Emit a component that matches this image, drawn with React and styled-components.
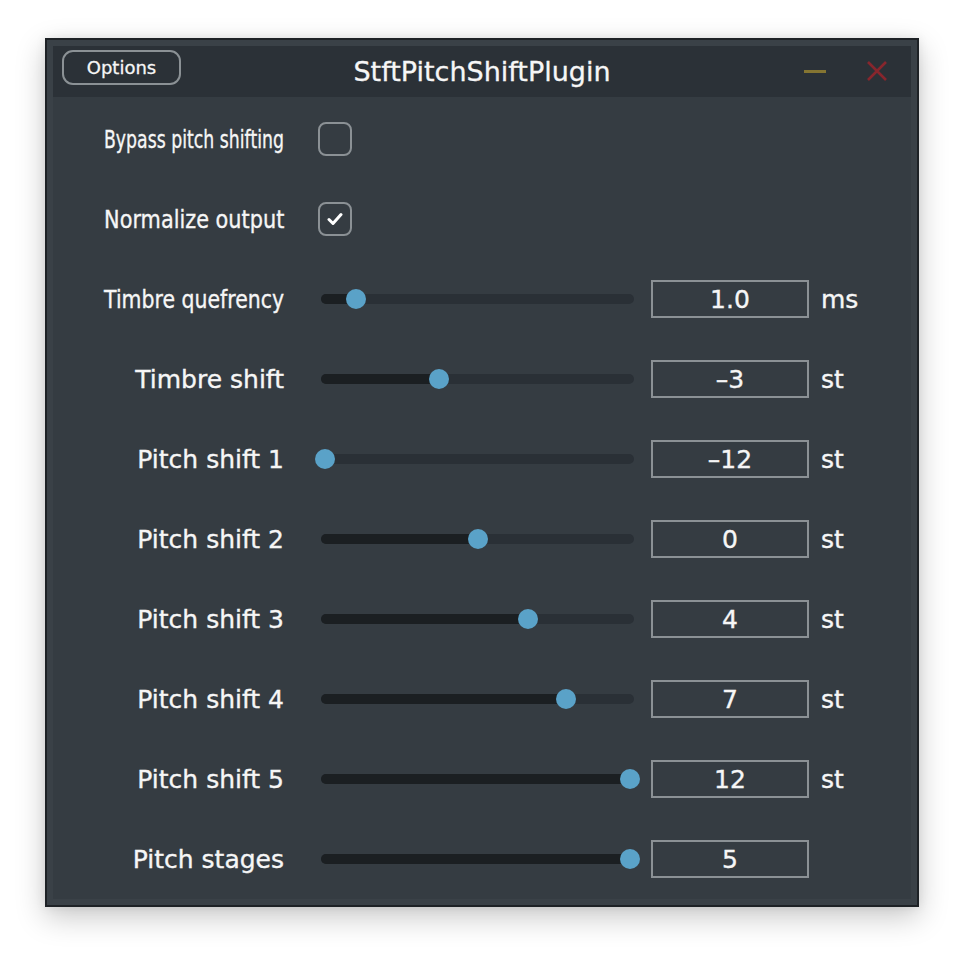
import React, { useLayoutEffect, useRef, useState } from 'react';
import styled, { createGlobalStyle } from 'styled-components';

const GlobalStyle = createGlobalStyle`
  html, body {
    margin: 0;
    padding: 0;
    background: #ffffff;
  }
  body {
    font-family: "DejaVu Sans", "Liberation Sans", sans-serif;
    color: #f6f6f6;
  }
`;

const Page = styled.div`
  padding: 38px 0 0 45px;
  width: 964px;
  height: 960px;
  box-sizing: border-box;
`;

const Window = styled.div`
  width: 874px;
  box-sizing: border-box;
  border: 2px solid #1e2226;
  background: #3a4147;
  padding: 6px;
  box-shadow: 0 10px 28px rgba(0, 0, 0, 0.22), 0 0 10px rgba(0, 0, 0, 0.08);
`;

const TitleBar = styled.div`
  position: relative;
  height: 51px;
  background: #2b3137;
  display: flex;
  align-items: center;
  justify-content: center;
`;

const OptionsButton = styled.button`
  position: absolute;
  left: 9px;
  top: 4px;
  width: 119px;
  height: 35px;
  box-sizing: border-box;
  border: 2px solid #8b9195;
  border-radius: 11px;
  background: #2b3137;
  color: #f6f6f6;
  font-family: inherit;
  font-size: 18px;
  padding: 0;
  -webkit-text-stroke: 0.3px #f6f6f6;
`;

const Title = styled.div`
  font-size: 27px;
  color: #f6f6f6;
  margin-top: -1px;
  -webkit-text-stroke: 0.3px #f6f6f6;
`;

const WindowButtons = styled.div`
  position: absolute;
  right: 23px;
  top: 14px;
  display: flex;
  align-items: center;
  gap: 40px;
`;

const Content = styled.div`
  background: #353c42;
  padding: 2px 0 0;
  height: 802px;
  box-sizing: border-box;
`;

const Row = styled.div`
  height: 80px;
  display: flex;
  align-items: center;
  padding-left: 51px;
  font-size: 25px;
  -webkit-text-stroke: 0.35px #f6f6f6;
`;

const LabelBox = styled.div`
  width: 180px;
  flex: none;
  display: flex;
  justify-content: flex-end;
  margin-right: 37px;
  white-space: nowrap;
`;

const LabelText = styled.span`
  display: inline-block;
  transform-origin: right center;
`;

const Checkbox = styled.div`
  width: 34px;
  height: 34px;
  box-sizing: border-box;
  margin-left: -3px;
  border: 2px solid #8b9195;
  border-radius: 8px;
  display: flex;
  align-items: center;
  justify-content: center;
`;

const Slider = styled.div`
  position: relative;
  width: 313px;
  height: 20px;
  flex: none;
  display: flex;
  align-items: center;
`;

const Track = styled.div`
  width: 100%;
  height: 10px;
  border-radius: 5px;
  background: #2a3036;
  overflow: hidden;
`;

const Fill = styled.div`
  height: 100%;
  background: #1b1f22;
`;

const Thumb = styled.div`
  position: absolute;
  top: 0;
  width: 20px;
  height: 20px;
  margin-left: -10px;
  border-radius: 50%;
  background: #5aa2c8;
`;

const ValueBox = styled.div`
  width: 158px;
  height: 38px;
  box-sizing: border-box;
  margin-left: 17px;
  border: 2px solid #8b9195;
  display: flex;
  align-items: center;
  justify-content: center;
`;

const Unit = styled.div`
  margin-left: 12px;
`;

const FitLabel = ({ children }) => {
  const ref = useRef(null);
  const [scale, setScale] = useState(1);
  useLayoutEffect(() => {
    const w = ref.current.offsetWidth;
    setScale(w > 180 ? 180 / w : 1);
  }, [children]);
  return (
    <LabelBox>
      <LabelText ref={ref} style={{ transform: `scaleX(${scale})` }}>
        {children}
      </LabelText>
    </LabelBox>
  );
};

const CheckRow = ({ label, checked }) => (
  <Row>
    <FitLabel>{label}</FitLabel>
    <Checkbox>
      {checked && (
        <svg width="16" height="14" viewBox="0 0 16 14">
          <path d="M2 7.5 L6 11.5 L14 2.5" fill="none" stroke="#ffffff" strokeWidth="3" strokeLinecap="round" strokeLinejoin="round" />
        </svg>
      )}
    </Checkbox>
  </Row>
);

const SliderRow = ({ label, value, pos, unit }) => {
  const x = 4 + pos * 305;
  return (
    <Row>
      <FitLabel>{label}</FitLabel>
      <Slider>
        <Track>
          <Fill style={{ width: x }} />
        </Track>
        <Thumb style={{ left: x }} />
      </Slider>
      <ValueBox>{value}</ValueBox>
      {unit && <Unit>{unit}</Unit>}
    </Row>
  );
};

const sliders = [
  { label: 'Timbre quefrency', value: '1.0', pos: 0.1, unit: 'ms' },
  { label: 'Timbre shift', value: '–3', pos: 9 / 24, unit: 'st' },
  { label: 'Pitch shift 1', value: '–12', pos: 0, unit: 'st' },
  { label: 'Pitch shift 2', value: '0', pos: 0.5, unit: 'st' },
  { label: 'Pitch shift 3', value: '4', pos: 16 / 24, unit: 'st' },
  { label: 'Pitch shift 4', value: '7', pos: 19 / 24, unit: 'st' },
  { label: 'Pitch shift 5', value: '12', pos: 1, unit: 'st' },
  { label: 'Pitch stages', value: '5', pos: 1 },
];

const App = () => (
  <Page>
    <GlobalStyle />
    <Window>
      <TitleBar>
        <OptionsButton>Options</OptionsButton>
        <Title>StftPitchShiftPlugin</Title>
        <WindowButtons>
          <svg width="22" height="22" viewBox="0 0 22 22">
            <rect x="0" y="10" width="22" height="3" fill="#857532" />
          </svg>
          <svg width="22" height="22" viewBox="0 0 22 22">
            <path d="M2 2 L20 20 M20 2 L2 20" stroke="#87262d" strokeWidth="2.6" />
          </svg>
        </WindowButtons>
      </TitleBar>
      <Content>
        <CheckRow label="Bypass pitch shifting" />
        <CheckRow label="Normalize output" checked />
        {sliders.map((s) => (
          <SliderRow key={s.label} {...s} />
        ))}
      </Content>
    </Window>
  </Page>
);

export default App;
